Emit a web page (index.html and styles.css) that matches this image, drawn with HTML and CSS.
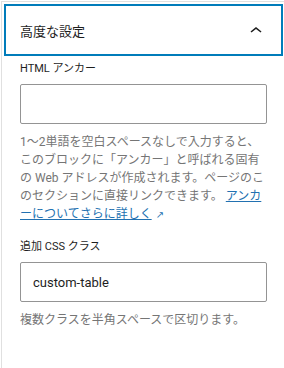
FILE: index.html
```html
<!DOCTYPE html>
<html lang="ja">
<head>
    <meta charset="UTF-8">
    <meta name="viewport" content="width=device-width, initial-scale=1.0">
    <title>高度な設定</title>
    <link rel="stylesheet" href="styles.css">
</head>
<body>
    <div class="sidebar">
        <div class="panel">
            <button class="panel-toggle" type="button" aria-expanded="true">
                <span class="panel-title">高度な設定</span>
                <svg class="panel-arrow" viewBox="0 0 24 24" width="24" height="24" aria-hidden="true">
                    <path d="M6.5 12.4L12 8l5.5 4.4-.9 1.2L12 10l-4.5 3.6-1-1.2z"></path>
                </svg>
            </button>
            <div class="panel-body">
                <div class="field">
                    <label class="field-label" for="anchor">HTML アンカー</label>
                    <input class="field-input" id="anchor" type="text">
                    <p class="field-help">1〜2単語を空白スペースなしで入力すると、このブロックに「アンカー」と呼ばれる固有の Web アドレスが作成されます。ページのこのセクションに直接リンクできます。 <a class="ext-link" href="#">アンカーについてさらに詳しく</a><span class="ext-icon">↗</span></p>
                </div>
                <div class="field">
                    <label class="field-label" for="className">追加 CSS クラス</label>
                    <input class="field-input" id="className" type="text" value="custom-table">
                    <p class="field-help">複数クラスを半角スペースで区切ります。</p>
                </div>
            </div>
        </div>
    </div>
</body>
</html>
```

FILE: styles.css
```css
* {
    box-sizing: border-box;
}
body {
    margin: 0;
    font-family: Roboto, "Noto Sans CJK JP", sans-serif;
    color: #1e1e1e;
    background: #fff;
}
.sidebar {
    margin: 1px 0 0 1px;
    min-height: calc(100vh - 1px);
    border-left: 1px solid #e0e0e0;
    border-top: 1px solid #e0e0e0;
}
.panel-toggle {
    display: flex;
    align-items: center;
    justify-content: space-between;
    width: calc(100% - 3px);
    height: 52px;
    margin: 2px 1px 0 2px;
    padding: 0 15px 0 16px;
    border: 0;
    background: #fff;
    box-shadow: inset 0 0 0 2px #007cba;
    font: inherit;
    font-size: 13px;
    color: #1e1e1e;
    text-align: left;
    cursor: pointer;
}
.panel-arrow {
    margin-top: 2px;
    fill: #1e1e1e;
}
.panel-body {
    padding: 5px 17px 16px 18px;
}
.field + .field {
    margin-top: 15px;
}
.field-label {
    display: block;
    margin-bottom: 7px;
    font-size: 11px;
    line-height: 16px;
    text-transform: uppercase;
}
.field-input {
    display: block;
    width: 100%;
    height: 40px;
    padding: 0 12px;
    border: 1px solid #949494;
    border-radius: 2px;
    font: inherit;
    font-size: 13px;
    color: #1e1e1e;
    background: #fff;
}
.field-help {
    margin: 9px 0 0;
    font-size: 12px;
    line-height: 18px;
    color: #757575;
}
.ext-link {
    color: #2271b1;
    text-decoration: underline;
}
.ext-icon {
    margin-left: 4px;
    font-family: "DejaVu Sans", sans-serif;
    font-size: 10px;
    color: #2271b1;
}
```
